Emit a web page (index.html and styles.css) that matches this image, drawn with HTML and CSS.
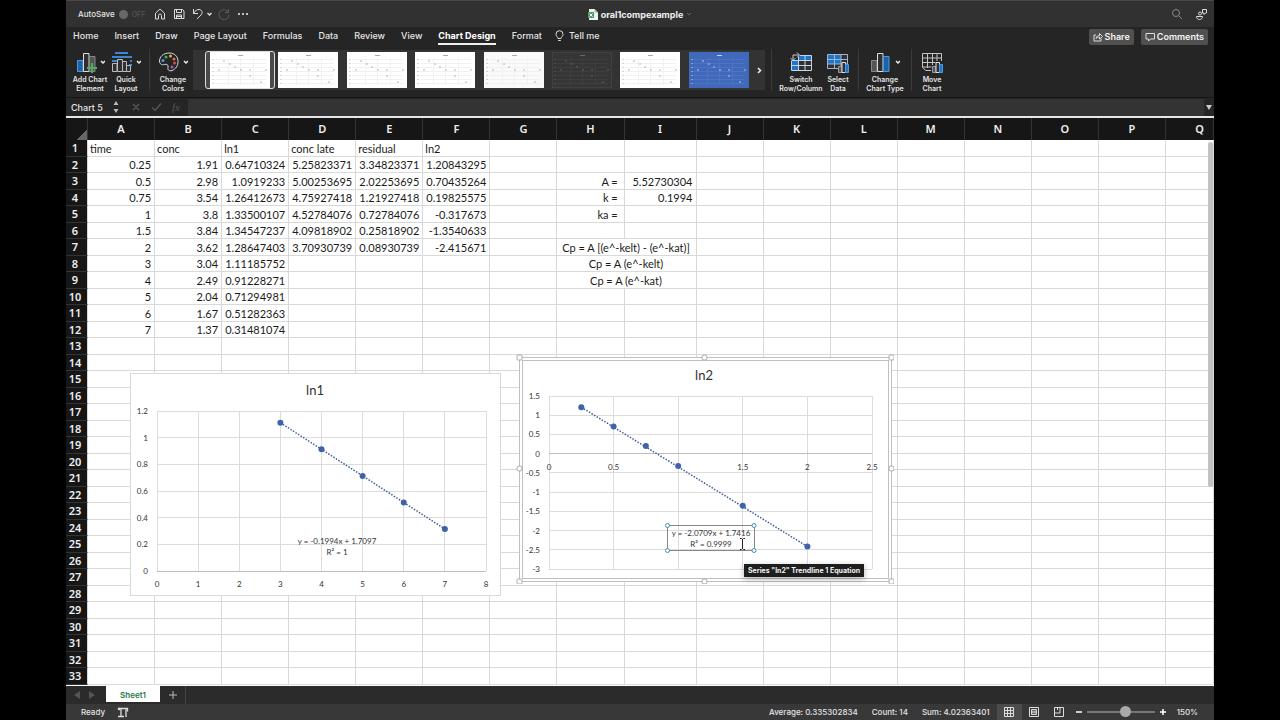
FILE: index.html
```html
<!DOCTYPE html>
<html lang="en">
<head>
    <meta charset="UTF-8">
    <meta name="viewport" content="width=device-width, initial-scale=1.0">
    <title>oral1compexample</title>
    <link rel="stylesheet" href="styles.css">
</head>
<body>
<div class="app">
    <header class="titlebar">
        <div class="quick">
            <label class="autosave">AutoSave <input type="checkbox" class="switch"><span class="off">OFF</span></label>
            <button class="icon-btn" aria-label="Home">
                <svg width="12" height="12" viewBox="0 0 12 12"><path d="M1.5 5.2 6 1l4.500 4.200V11H7.500V7.500a1.500 1.500 0 0 0-3 0V11h-3z"/></svg>
            </button>
            <button class="icon-btn" aria-label="Save">
                <svg width="12" height="12" viewBox="0 0 12 12"><path d="M1.500 1.500h8l1.500 1.500v7.500H1.500zM3.500 1.500v3h5v-3M3.500 10.500V7h5v3.500M4 8.500h4"/></svg>
            </button>
            <button class="icon-btn undo" aria-label="Undo">
                <svg width="20" height="12" viewBox="0 0 20 12"><path d="M1.500 1v4.500H6M1.500 5.500C3 2.500 5 1.500 7 1.500c3 0 4 3.500 2 5.500l-4 4"/><path class="bold" d="m15.500 5 2 2 2-2"/></svg>
            </button>
            <button class="icon-btn dim" aria-label="Redo">
                <svg width="12" height="12" viewBox="0 0 12 12"><path d="M10.500 1v3.500H7M10.500 4.500A5 5 0 1 0 11 6.500"/></svg>
            </button>
            <button class="icon-btn" aria-label="More">
                <svg width="12" height="12" viewBox="0 0 12 12"><g class="dots"><circle cx="2" cy="6" r="1"/><circle cx="6" cy="6" r="1"/><circle cx="10" cy="6" r="1"/></g></svg>
            </button>
        </div>
        <div class="doc">
            <svg width="10" height="11" viewBox="0 0 10 11"><path d="M1 0h5.500L10 3.500V11H1z" fill="#eef3ee"/><path d="M6.500 0v3.500H10" fill="#9fc4aa"/><rect y="3" width="6" height="6" fill="#4f9a68"/><path d="m1.500 4.500 3 3m0-3-3 3" stroke="#fff"/></svg>
            <span>oral1compexample</span>
            <svg width="6" height="4" viewBox="0 0 6 4"><path d="m1 1 2 2 2-2" fill="none" stroke="#666"/></svg>
        </div>
        <div class="title-right">
            <button class="icon-btn dim2" aria-label="Search">
                <svg width="12" height="12" viewBox="0 0 12 12"><circle cx="5" cy="5" r="3.500"/><path d="m7.500 7.500 3.500 3.500"/></svg>
            </button>
            <button class="icon-btn" aria-label="Share presence">
                <svg width="13" height="13" viewBox="0 0 13 13"><circle cx="5" cy="5.500" r="1.500"/><path d="M1.500 8.500h6c0 4-6 4-6 0zM7.500 1.500h4v3.500h-1l-1.500 1.500V5H7.500z"/></svg>
            </button>
        </div>
    </header>

    <nav class="tabs">
        <a href="#">Home</a>
        <a href="#">Insert</a>
        <a href="#">Draw</a>
        <a href="#">Page Layout</a>
        <a href="#">Formulas</a>
        <a href="#">Data</a>
        <a href="#">Review</a>
        <a href="#">View</a>
        <a href="#" class="active">Chart Design</a>
        <a href="#">Format</a>
        <a href="#" class="tell"><svg width="9" height="12" viewBox="0 0 9 12"><path d="M3 8.500C3 7 1 6.500 1 4.200a3.500 3.500 0 0 1 7 0C8 6.500 6 7 6 8.500zM3.200 10.500h2.600"/></svg>Tell me</a>
        <div class="tab-actions">
            <button><svg width="10" height="10" viewBox="0 0 10 10"><path d="M3 3H1v6h7V6.500M3 6.500C3.500 4 5 3.500 6.500 3.500V1.500l3 3-3 2.500V5C5 5 4 5.500 3 6.500z"/></svg>Share</button>
            <button><svg width="10" height="10" viewBox="0 0 10 10"><path d="M1 1.500h8.500V7h-4L3.500 9V7H1z"/></svg>Comments</button>
        </div>
    </nav>

    <div class="ribbon">
        <div class="group">
            <button class="tool w38">
                <svg width="30" height="22" viewBox="0 0 30 22"><path d="M2.500 9.500H8v11H2.500z" fill="#1e62a6" stroke="#4c9be0"/><path d="M8.500 2.500H14v18H8.500z" fill="#303030" stroke="#ddd"/><path d="M14.500 5.500H20v15h-5.500z" fill="#555" stroke="#888"/><path d="M17 12v10M12 17h10" stroke="#4fae62" stroke-width="2"/><path class="caret" d="m26 10 2 2 2-2"/></svg>
                Add Chart<br>Element
            </button>
            <button class="tool w34">
                <svg width="30" height="22" viewBox="0 0 30 22"><path d="M4 2h13M1 6h20M1 10h5m13 0h2M1 14h3m14 0h3M1 18h3" stroke="#3a86cf" stroke-width="2"/><path d="M1.500 12.500h4.500v8H1.500zM6.500 8.500h5v12h-5zM11.500 10.500h4v10h-4zM15.500 14.500h4v6h-4z" fill="#303030" stroke="#bbb"/><path class="caret" d="m26 10 2 2 2-2"/></svg>
                Quick<br>Layout
            </button>
        </div>
        <div class="group">
            <button class="tool w34">
                <svg width="30" height="22" viewBox="0 0 30 22"><path d="M11.500 2C5 2 1.500 6 1.500 10c0 3 2.500 4.500 5 3.500 2.500-.8 4 .5 3.500 3C9.500 19 11 20.500 14 19.500c4-1.500 6-5 6-9C20 5 16 2 11.500 2z" fill="none" stroke="#ddd"/><circle cx="5" cy="9.500" r="1.500" fill="#4c9be0"/><circle cx="8" cy="6" r="1.500" fill="#4fae62"/><circle cx="12.500" cy="5" r="1.500" fill="#e3b23a"/><circle cx="16" cy="8" r="1.500" fill="#dd6c43"/><circle cx="16.500" cy="12" r="1.500" fill="#d04f4f"/><circle cx="14" cy="16" r="1.500" fill="#a45bb5"/><path class="caret" d="m26 10 2 2 2-2"/></svg>
                Change<br>Colors
            </button>
            <div class="gallery" id="gallery">
                <button class="more" aria-label="More styles"><svg width="5" height="7" viewBox="0 0 5 7"><path d="m1 1 2.500 2.500L1 6" fill="none" stroke="#eee" stroke-width="1.500"/></svg></button>
            </div>
        </div>
        <div class="group">
            <button class="tool w46">
                <svg width="22" height="22" viewBox="0 0 22 22"><path d="M1.500 4.500h20v15h-20z" fill="#303030"/><path d="M8 5h13v5H8zM2 10h6v9H2z" fill="#1f75c9"/><path d="M1.500 10v9.500h20v-15H10M1.500 14.500h20M1.500 9.500h20M8.500 6v13.500M15 4.500v15" fill="none" stroke="#c5d5e5"/><path d="M0 0h8v9H0z" fill="#252525"/><path d="M3 9V4h6M7 1.500 9.500 4 7 6.500M.5 7 3 9.500 5.500 7" fill="none" stroke="#ccc"/></svg>
                Switch<br>Row/Column
            </button>
            <button class="tool w28">
                <svg width="22" height="22" viewBox="0 0 22 22"><path d="M.5 3.500h20v14H.5z" fill="#303030"/><path d="M1 4h13v9H1z" fill="#1f75c9"/><path d="M.5 3.500h20v14H.5zM.5 8.500h20M.5 13h20M7.500 3.500v14M14 3.500v14" fill="none" stroke="#9fb6cc"/><path d="M11.500 15.500h3.500v6h-3.500z" fill="#555" stroke="#999"/><path d="M15 11.500h3.500v10H15z" fill="#303030" stroke="#ddd"/><path d="M18.500 13.500h3v8h-3z" fill="#1f75c9" stroke="#4c9be0"/></svg>
                Select<br>Data
            </button>
        </div>
        <div class="group">
            <button class="tool w40">
                <svg width="30" height="22" viewBox="0 0 30 22"><path d="M1.500 9.500H7v11H1.500z" fill="#555" stroke="#888"/><path d="M7.500 2.500H13v18H7.500z" fill="#303030" stroke="#ddd"/><path d="M13.500 5.500H19v15h-5.500z" fill="#1e62a6" stroke="#4c9be0"/><path class="caret" d="m26 10 2 2 2-2"/></svg>
                Change<br>Chart Type
            </button>
        </div>
        <div class="group">
            <button class="tool w28">
                <svg width="22" height="22" viewBox="0 0 22 22"><path d="M10 19.500H5l-3.500-3v-14h19V10M1.500 7h19M1.500 11.500h13M1.500 16h9M6.500 2.500V17M11.500 2.500V14M16 2.500V10" fill="none" stroke="#c4c4c4"/><path d="M11.500 15.500h3.500v6h-3.500z" fill="#555" stroke="#999"/><path d="M15 11.500h3.500v10H15z" fill="#303030" stroke="#ddd"/><path d="M18.500 13.500h3v8h-3z" fill="#1f75c9" stroke="#4c9be0"/></svg>
                Move<br>Chart
            </button>
        </div>
    </div>

    <div class="formula-bar">
        <input class="name-box" aria-label="Name box" value="Chart 5">
        <svg class="stepper" width="6" height="14" viewBox="0 0 6 14"><path d="M3 1l2.500 4h-5zM3 13l2.500-4h-5z" fill="#bbb"/></svg>
        <svg class="fx" width="52" height="12" viewBox="0 0 52 12"><path d="m2 3 6 6m0-6L2 9M21 6.500l3 3L30 2.500" fill="none" stroke="#555" stroke-width="1.500"/><text x="41" y="10">fx</text></svg>
        <input class="formula" aria-label="Formula">
        <svg class="expand" width="6" height="5" viewBox="0 0 6 5"><path d="M0 0h6L3 5z" fill="#ccc"/></svg>
    </div>

    <main class="sheet">
        <table class="grid">
            <colgroup id="cols"></colgroup>
            <thead><tr id="head"></tr></thead>
            <tbody id="rows"></tbody>
        </table>

        <svg class="chart chart-one" width="371" height="223" viewBox="0 0 371 223">
            <rect class="frame" x="0.500" y="0.500" width="370" height="222"/>
            <text class="chart-title" x="185" y="22">ln1</text>
            <g id="plot1"></g>
            <text class="mid" x="207" y="171">y = -0.1994x + 1.7097</text>
            <text class="mid" x="207" y="182">R² = 1</text>
        </svg>

        <svg class="chart chart-two" width="378" height="230" viewBox="0 0 378 230">
            <rect class="frame select" x="3.500" y="3.500" width="372" height="224"/>
            <rect class="frame select" x="6.500" y="6.500" width="366" height="218"/>
            <text class="chart-title" x="188" y="26">ln2</text>
            <g id="plot2"></g>
            <g class="handles">
                <rect x="1" y="1" width="5" height="5" rx="1"/><rect x="186" y="1" width="5" height="5" rx="2"/><rect x="373" y="1" width="5" height="5" rx="1"/>
                <rect x="1" y="112" width="5" height="5" rx="2"/><rect x="373" y="112" width="5" height="5" rx="2"/>
                <rect x="1" y="225" width="5" height="5" rx="1"/><rect x="186" y="225" width="5" height="5" rx="2"/><rect x="373" y="225" width="5" height="5" rx="1"/>
            </g>
            <rect class="eq-box" x="151.500" y="171.500" width="87" height="25"/>
            <text class="mid" x="195" y="182">y = -2.0709x + 1.7416</text>
            <text class="mid" x="195" y="193">R² = 0.9999</text>
            <g class="eq-handles"><circle cx="151.500" cy="171.500" r="2"/><circle cx="238" cy="171.500" r="2"/><circle cx="151.500" cy="196.500" r="2"/><circle cx="238" cy="196.500" r="2"/></g>
            <path class="ibeam" d="M224 184.500h1.500l1 1 1-1h1.500M226.500 185v10M224 195.500h1.500l1-1 1 1h1.500"/>
        </svg>
        <div class="tooltip">Series "ln2" Trendline 1 Equation</div>
        <div class="scrollbar"></div>
    </main>

    <div class="sheet-tabs">
        <button class="arrow" aria-label="Previous sheet"><svg width="6" height="8" viewBox="0 0 6 8"><path d="M6 0v8L0 4z"/></svg></button>
        <button class="arrow" aria-label="Next sheet"><svg width="6" height="8" viewBox="0 0 6 8"><path d="M0 0v8l6-4z"/></svg></button>
        <button class="sheet-tab">Sheet1</button>
        <button class="add" aria-label="Add sheet"><svg width="8" height="8" viewBox="0 0 8 8"><path d="M4 0v8M0 4h8" stroke="#bbb"/></svg></button>
    </div>

    <footer class="status">
        <span>Ready</span>
        <svg class="access" width="12" height="11" viewBox="0 0 12 11"><path d="M1 1.500h6M4 2v7.500M1 9.500h6M9 10V2.500M7 1.500h3.500v3" fill="none" stroke="#ddd" stroke-width="1.300"/><circle cx="2" cy="2" r="1.300" fill="#ddd"/></svg>
        <div class="stats"><span>Average: 0.335302834</span><span>Count: 14</span><span>Sum: 4.02363401</span></div>
        <div class="views">
            <button class="on" aria-label="Normal view"><svg width="10" height="10" viewBox="0 0 10 10"><path d="M.5.5h9v9h-9zM.5 3.500h9M.5 6.500h9M3.500.5v9M6.500.5v9"/></svg></button>
            <button aria-label="Page layout view"><svg width="10" height="10" viewBox="0 0 10 10"><path d="M.5.5h9v9h-9zM2.500 2.500h5v5h-5zM3 4.200h4M3 5.800h4"/></svg></button>
            <button aria-label="Page break view"><svg width="10" height="10" viewBox="0 0 10 10"><path d="M.5.5h9v9h-9zM.5 6h5.500V.5M3.500.5V3"/></svg></button>
        </div>
        <div class="zoom">
            <button aria-label="Zoom out"><svg width="6" height="6" viewBox="0 0 6 6"><path d="M0 3h6" stroke="#fff" stroke-width="1.500"/></svg></button>
            <input type="range" aria-label="Zoom" min="0" max="100" value="58">
            <button aria-label="Zoom in"><svg width="6" height="6" viewBox="0 0 6 6"><path d="M0 3h6M3 0v6" stroke="#fff" stroke-width="1.500"/></svg></button>
            <span>150%</span>
        </div>
    </footer>
</div>
<script src="script.js"></script>
</body>
</html>
```
FILE: styles.css
```css
* {
    box-sizing: border-box;
}
body {
    margin: 0;
    background: #000;
    color: #e4e4e4;
    font-family: Inter, "Liberation Sans", sans-serif;
    font-size: 9px;
}
button, input {
    font: inherit;
    color: inherit;
    background: none;
    border: 0;
    padding: 0;
    margin: 0;
}
button {
    display: flex;
    align-items: center;
    justify-content: center;
}
a {
    color: inherit;
    text-decoration: none;
}
.app {
    display: flex;
    flex-direction: column;
    height: 100vh;
    margin: 0 66px;
    background: #252525;
}

/* title bar */
.titlebar {
    display: grid;
    grid-template-columns: 1fr auto 1fr;
    align-items: center;
    height: 27px;
    flex: none;
    background: #313131;
    border-top: 1px solid #484848;
}
.quick {
    display: flex;
    align-items: center;
    gap: 7px;
    padding-left: 12px;
}
.autosave {
    display: flex;
    align-items: center;
    gap: 4px;
    margin-right: 0;
    width: 69px;
    font-size: 8px;
    font-weight: 500;
}
.switch {
    appearance: none;
    width: 9px;
    height: 9px;
    border-radius: 50%;
    background: #686868;
}
.off {
    color: #555;
    font-size: 7px;
}
.icon-btn svg, .tell svg, .tab-actions svg {
    fill: none;
    stroke: #ddd;
}
.undo {
    margin-right: -1px;
}
.icon-btn .bold {
    stroke-width: 1.5;
}
.icon-btn .dots {
    fill: #eee;
    stroke: none;
}
.icon-btn.dim svg {
    stroke: #5c5c5c;
}
.icon-btn.dim2 svg {
    stroke: #888;
}
.doc {
    display: flex;
    align-items: center;
    gap: 3px;
    font-weight: 700;
    color: #f0f0f0;
}
.title-right {
    display: flex;
    justify-content: flex-end;
    gap: 12px;
    padding-right: 6px;
}

/* ribbon tabs */
.tabs {
    display: flex;
    gap: 16px;
    height: 22px;
    flex: none;
    padding: 2px 6px 0 7px;
    font-weight: 500;
    line-height: 14px;
}
.tabs > a {
    height: 16px;
}
.tabs .active {
    font-weight: 700;
    color: #fff;
    border-bottom: 2px solid #eee;
}
.tabs .tell {
    display: flex;
    gap: 5px;
    margin-left: -3px;
}
.tell svg {
    margin-top: 1px;
}
.tab-actions {
    display: flex;
    gap: 7px;
    margin-left: auto;
}
.tab-actions button {
    gap: 2px;
    height: 16px;
    padding: 0 4px;
    border-radius: 2px;
    background: #505050;
    color: #f4f4f4;
    font-weight: 600;
}

/* ribbon */
.ribbon {
    display: flex;
    height: 49px;
    flex: none;
    padding-left: 5px;
    border-bottom: 1px solid #151515;
}
.group {
    display: flex;
    margin-bottom: 6px;
    padding-right: 6px;
    margin-right: 6px;
    border-right: 1px solid #3a3a3a;
}
.group:last-child {
    border: 0;
}
.tool {
    flex-direction: column;
    justify-content: flex-start;
    font-size: 7px;
    font-weight: 600;
    line-height: 9px;
    white-space: nowrap;
    padding-top: 2px;
}
.tool svg {
    margin-bottom: 2px;
    flex: none;
}
.w28 { width: 28px; }
.w34 { width: 34px; }
.w38 { width: 38px; }
.w40 { width: 40px; }
.w46 { width: 46px; }
.caret {
    fill: none;
    stroke: #eee;
    stroke-width: 1.5;
}
.gallery {
    display: flex;
    align-items: center;
    justify-content: space-between;
    width: 572px;
    height: 40px;
    margin: 1px 0 0 3px;
    padding-left: 17px;
    background: #333;
    isolation: isolate;
}
.thumb {
    position: relative;
    width: 60px;
    height: 36px;
}
.thumb.selected::before {
    content: "";
    position: absolute;
    inset: -1px -5px;
    z-index: -1;
    background: #4a4a4a;
    border: 1px solid #ddd;
    border-radius: 3px;
}
.more {
    justify-content: flex-start;
    width: 8px;
    height: 36px;
}

/* formula bar */
.formula-bar {
    display: flex;
    align-items: center;
    height: 20px;
    flex: none;
    border-bottom: 2px solid #e6e6e6;
}
.name-box {
    width: 47px;
    padding-left: 5px;
    font-weight: 500;
}
.stepper {
    margin-right: 12px;
}
.fx text {
    fill: #555;
    font: italic 11px "Liberation Serif", serif;
}
.formula {
    flex: 1;
    height: 17px;
    margin-left: 5px;
    background: #333;
}
.expand {
    margin: 0 2px;
}

/* worksheet */
.sheet {
    position: relative;
    flex: 1;
    min-height: 0;
    overflow: hidden;
    background: #fff;
    color: #1a1a1a;
    font-family: Lato, "Noto Sans", sans-serif;
}
.grid {
    width: 100%;
    table-layout: fixed;
    border-spacing: 0;
    font-size: 11px;
    line-height: 14px;
}
.col-head { width: 22px; }
.col-wide { width: 72px; }
.col-last { width: 48px; }
.grid th {
    padding: 0;
    background: #161616;
    border-right: 1px solid #333;
    color: #eee;
    font-family: "Noto Sans", sans-serif;
    font-weight: 600;
}
.grid thead th {
    height: 22px;
}
.grid thead th:first-child {
    background: linear-gradient(135deg, transparent 75%, #666 75%) #161616;
}
.grid thead th:last-child {
    padding-left: 20px;
}
.grid tbody th {
    padding-right: 3px;
    border-right: 1px solid #d9d9d9;
    border-bottom: 1px solid #333;
    text-align: center;
}
.grid td {
    padding: 1px 3px 0 2px;
    border-right: 1px solid #d9d9d9;
    border-bottom: 1px solid #d9d9d9;
    white-space: nowrap;
}
.grid tbody tr {
    height: 16px;
}
.grid tbody tr:nth-child(odd) {
    height: 17px;
}
.num {
    text-align: right;
}
.center {
    text-align: center;
}

/* charts float over the cells */
.chart {
    position: absolute;
    font-size: 8px;
    fill: #333;
}
.chart-one {
    left: 64px;
    top: 255px;
}
.chart-two {
    left: 450px;
    top: 236px;
}
.frame {
    fill: #fff;
    stroke: #d9d9d9;
}
.frame.select {
    stroke: #bfbfbf;
}
.chart-title {
    font-size: 13px;
    text-anchor: middle;
}
.mid {
    text-anchor: middle;
}
.end {
    text-anchor: end;
}
.line {
    stroke: #dcdcdc;
}
.line.axis {
    stroke: #bdbdbd;
}
.trend {
    fill: none;
    stroke: #3d5c9c;
    stroke-width: 1.5;
    stroke-dasharray: 1.5 1.5;
}
.dot {
    fill: #3f62a8;
}
.handles rect {
    fill: #fff;
    stroke: #aaa;
}
.eq-box {
    fill: none;
    stroke: #888;
}
.eq-handles circle {
    fill: #fff;
    stroke: #3f8fb5;
}
.ibeam {
    fill: none;
    stroke: #222;
}
.tooltip {
    position: absolute;
    left: 678px;
    top: 446px;
    padding: 0 4px;
    background: #1e1e1e;
    color: #f4f4f4;
    font: 700 7px/13px Inter, sans-serif;
    box-shadow: 0 2px 6px rgba(0, 0, 0, 0.3);
}
.scrollbar {
    position: absolute;
    right: 1px;
    top: 24px;
    width: 5px;
    height: 345px;
    border-radius: 3px;
    background: #c2c2c2;
}

/* sheet tabs */
.sheet-tabs {
    display: flex;
    height: 18px;
    flex: none;
    padding-left: 8px;
    background: #2b2b2b;
}
.arrow {
    width: 6px;
    margin-right: 9px;
    fill: #555;
}
.sheet-tab {
    width: 54px;
    height: 16px;
    margin-left: 2px;
    padding-top: 2px;
    background: #fff;
    color: #1e7a45;
    font-size: 8px;
    font-weight: 600;
}
.add {
    width: 26px;
    border-right: 1px solid #444;
}

/* status bar */
.status {
    display: flex;
    align-items: center;
    height: 16px;
    flex: none;
    padding: 0 16px 0 15px;
    background: #383838;
    font-size: 8px;
    font-weight: 500;
}
.access {
    margin-left: 12px;
}
.stats {
    display: flex;
    gap: 14px;
    margin-left: auto;
}
.views {
    display: flex;
    margin-left: 7px;
}
.views button {
    width: 25px;
    height: 16px;
}
.views .on {
    background: #4c4c4c;
}
.views svg {
    fill: none;
    stroke: #ddd;
}
.zoom {
    display: flex;
    align-items: center;
    gap: 5px;
    margin-left: 4px;
}
.zoom span {
    margin-left: 6px;
}
.zoom input {
    appearance: none;
    width: 68px;
    height: 11px;
}
.zoom input::-webkit-slider-runnable-track {
    height: 2px;
    background: #777;
}
.zoom input::-webkit-slider-thumb {
    appearance: none;
    width: 11px;
    height: 11px;
    margin-top: -5px;
    border-radius: 50%;
    background: #a9a9a9;
}
```
FILE: script.js
```js
const columns = 'ABCDEFGHIJKLMNOPQ'.split('');
const rowCount = 33;

const cells = {
    1: { A: 'time', B: 'conc', C: 'ln1', D: 'conc late', E: 'residual', F: 'ln2' },
    2: { A: 0.25, B: 1.91, C: 0.64710324, D: 5.25823371, E: 3.34823371, F: 1.20843295 },
    3: { A: 0.5, B: 2.98, C: 1.0919233, D: 5.00253695, E: 2.02253695, F: 0.70435264, H: 'A =', I: 5.52730304 },
    4: { A: 0.75, B: 3.54, C: 1.26412673, D: 4.75927418, E: 1.21927418, F: 0.19825575, H: 'k =', I: 0.1994 },
    5: { A: 1, B: 3.8, C: 1.33500107, D: 4.52784076, E: 0.72784076, F: -0.317673, H: 'ka =' },
    6: { A: 1.5, B: 3.84, C: 1.34547237, D: 4.09818902, E: 0.25818902, F: -1.3540633 },
    7: { A: 2, B: 3.62, C: 1.28647403, D: 3.70930739, E: 0.08930739, F: -2.415671, H: 'Cp = A [(e^-kelt) - (e^-kat)]' },
    8: { A: 3, B: 3.04, C: 1.11185752, H: 'Cp = A (e^-kelt)' },
    9: { A: 4, B: 2.49, C: 0.91228271, H: 'Cp = A (e^-kat)' },
    10: { A: 5, B: 2.04, C: 0.71294981 },
    11: { A: 6, B: 1.67, C: 0.51282363 },
    12: { A: 7, B: 1.37, C: 0.31481074 }
};

// Column widths: I is wider, Q is cut by the window edge
const colClass = { I: 'col-wide', Q: 'col-last' };
document.getElementById('cols').innerHTML = '<col class="col-head">' +
    columns.map(c => `<col class="${colClass[c] || ''}">`).join('');
document.getElementById('head').innerHTML = '<th></th>' + columns.map(c => `<th>${c}</th>`).join('');

let html = '';
for (let r = 1; r <= rowCount; r++) {
    const row = cells[r] || {};
    const merged = r >= 7 && r <= 9;
    html += `<tr><th>${r}</th>`;
    for (const c of columns) {
        if (merged && c === 'I') continue;
        const value = row[c] === undefined ? '' : row[c];
        if (merged && c === 'H') {
            html += `<td class="center" colspan="2">${value}</td>`;
        } else if (c === 'H') {
            html += `<td class="num">${value && value + '&nbsp;'}</td>`;
        } else {
            html += `<td class="${typeof value === 'number' ? 'num' : ''}">${value}</td>`;
        }
    }
    html += '</tr>';
}
document.getElementById('rows').innerHTML = html;

// Draws grid lines, axis labels, points and the trendline of one chart
function drawPlot(id, o) {
    const x = v => o.left + (v - o.x[0]) / (o.x[1] - o.x[0]) * o.width;
    const y = v => o.top + (o.y[1] - v) / (o.y[1] - o.y[0]) * o.height;
    const crisp = v => Math.floor(v) + 0.5;
    let out = '';
    for (let v = o.x[0]; v <= o.x[1]; v += o.x[2]) {
        out += `<path class="line" d="M${crisp(x(v))} ${o.top}v${o.height}"/>`;
        if (!o.hide || v !== o.hide) {
            out += `<text class="mid" x="${x(v)}" y="${y(0) + 16}">${v}</text>`;
        }
    }
    for (let i = 0; i <= Math.round((o.y[1] - o.y[0]) / o.y[2]); i++) {
        const v = Math.round((o.y[0] + i * o.y[2]) * 10) / 10;
        out += `<path class="line${v === 0 ? ' axis' : ''}" d="M${o.left} ${crisp(y(v))}h${o.width}"/>`;
        out += `<text class="end" x="${o.left - 9}" y="${y(v) + 3}">${v}</text>`;
    }
    const pts = o.points.map(p => [x(p[0]), y(p[1])]);
    out += `<path class="trend" d="M${pts[0]}L${pts[pts.length - 1]}"/>`;
    out += pts.map(p => `<circle class="dot" cx="${p[0]}" cy="${p[1]}" r="3"/>`).join('');
    document.getElementById(id).innerHTML = out;
}

drawPlot('plot1', {
    left: 27, top: 38, width: 329, height: 160, x: [0, 8, 1], y: [0, 1.2, 0.2],
    points: [8, 9, 10, 11, 12].map(r => [cells[r].A, cells[r].C])
});
drawPlot('plot2', {
    left: 33, top: 42, width: 323, height: 173, x: [0, 2.5, 0.5], y: [-3, 1.5, 0.5], hide: 1,
    points: [2, 3, 4, 5, 6, 7].map(r => [cells[r].A, cells[r].F])
});

// Chart style gallery
const styles = ['#fff', '#fff', '#fff', '#fff', '#fafafa', '#363636', '#fff', '#4169bb'];
const marks = [[14, 9], [20, 12], [25, 15], [31, 18], [40, 24], [51, 30], [9, 18], [40, 18], [56, 18]];
const more = document.querySelector('.more');
styles.forEach((bg, i) => {
    const dark = i === 5;
    const blue = i === 7;
    const ink = dark ? '#666' : blue ? '#c5d3f0' : '#aaa';
    const rule = dark ? '#3e3e3e' : blue ? '#4d73c2' : '#f1f1f1';
    const lines = [7, 11, 15, 19, 23, 27, 31].map(v => `M5 ${v}.5h51`).join('');
    const thumb = document.createElement('button');
    thumb.className = 'thumb' + (i === 0 ? ' selected' : '');
    thumb.setAttribute('aria-label', 'Style ' + (i + 1));
    thumb.innerHTML = `<svg width="60" height="36" viewBox="0 0 60 36">
        <rect width="60" height="36" fill="${bg}" ${dark ? 'stroke="#4a4a4a"' : ''}/>
        <path d="${lines}M18.5 6v27M30.5 6v27M43.5 6v27" stroke="${rule}"/>
        <path d="M28 3.500h5" stroke="${ink}"/>
        <path d="M3 7v26" stroke="${ink}" stroke-dasharray="1 3"/>
        ${marks.map(m => `<circle cx="${m[0]}" cy="${m[1]}" r="0.800" fill="${ink}"/>`).join('')}</svg>`;
    more.before(thumb);
});
```
